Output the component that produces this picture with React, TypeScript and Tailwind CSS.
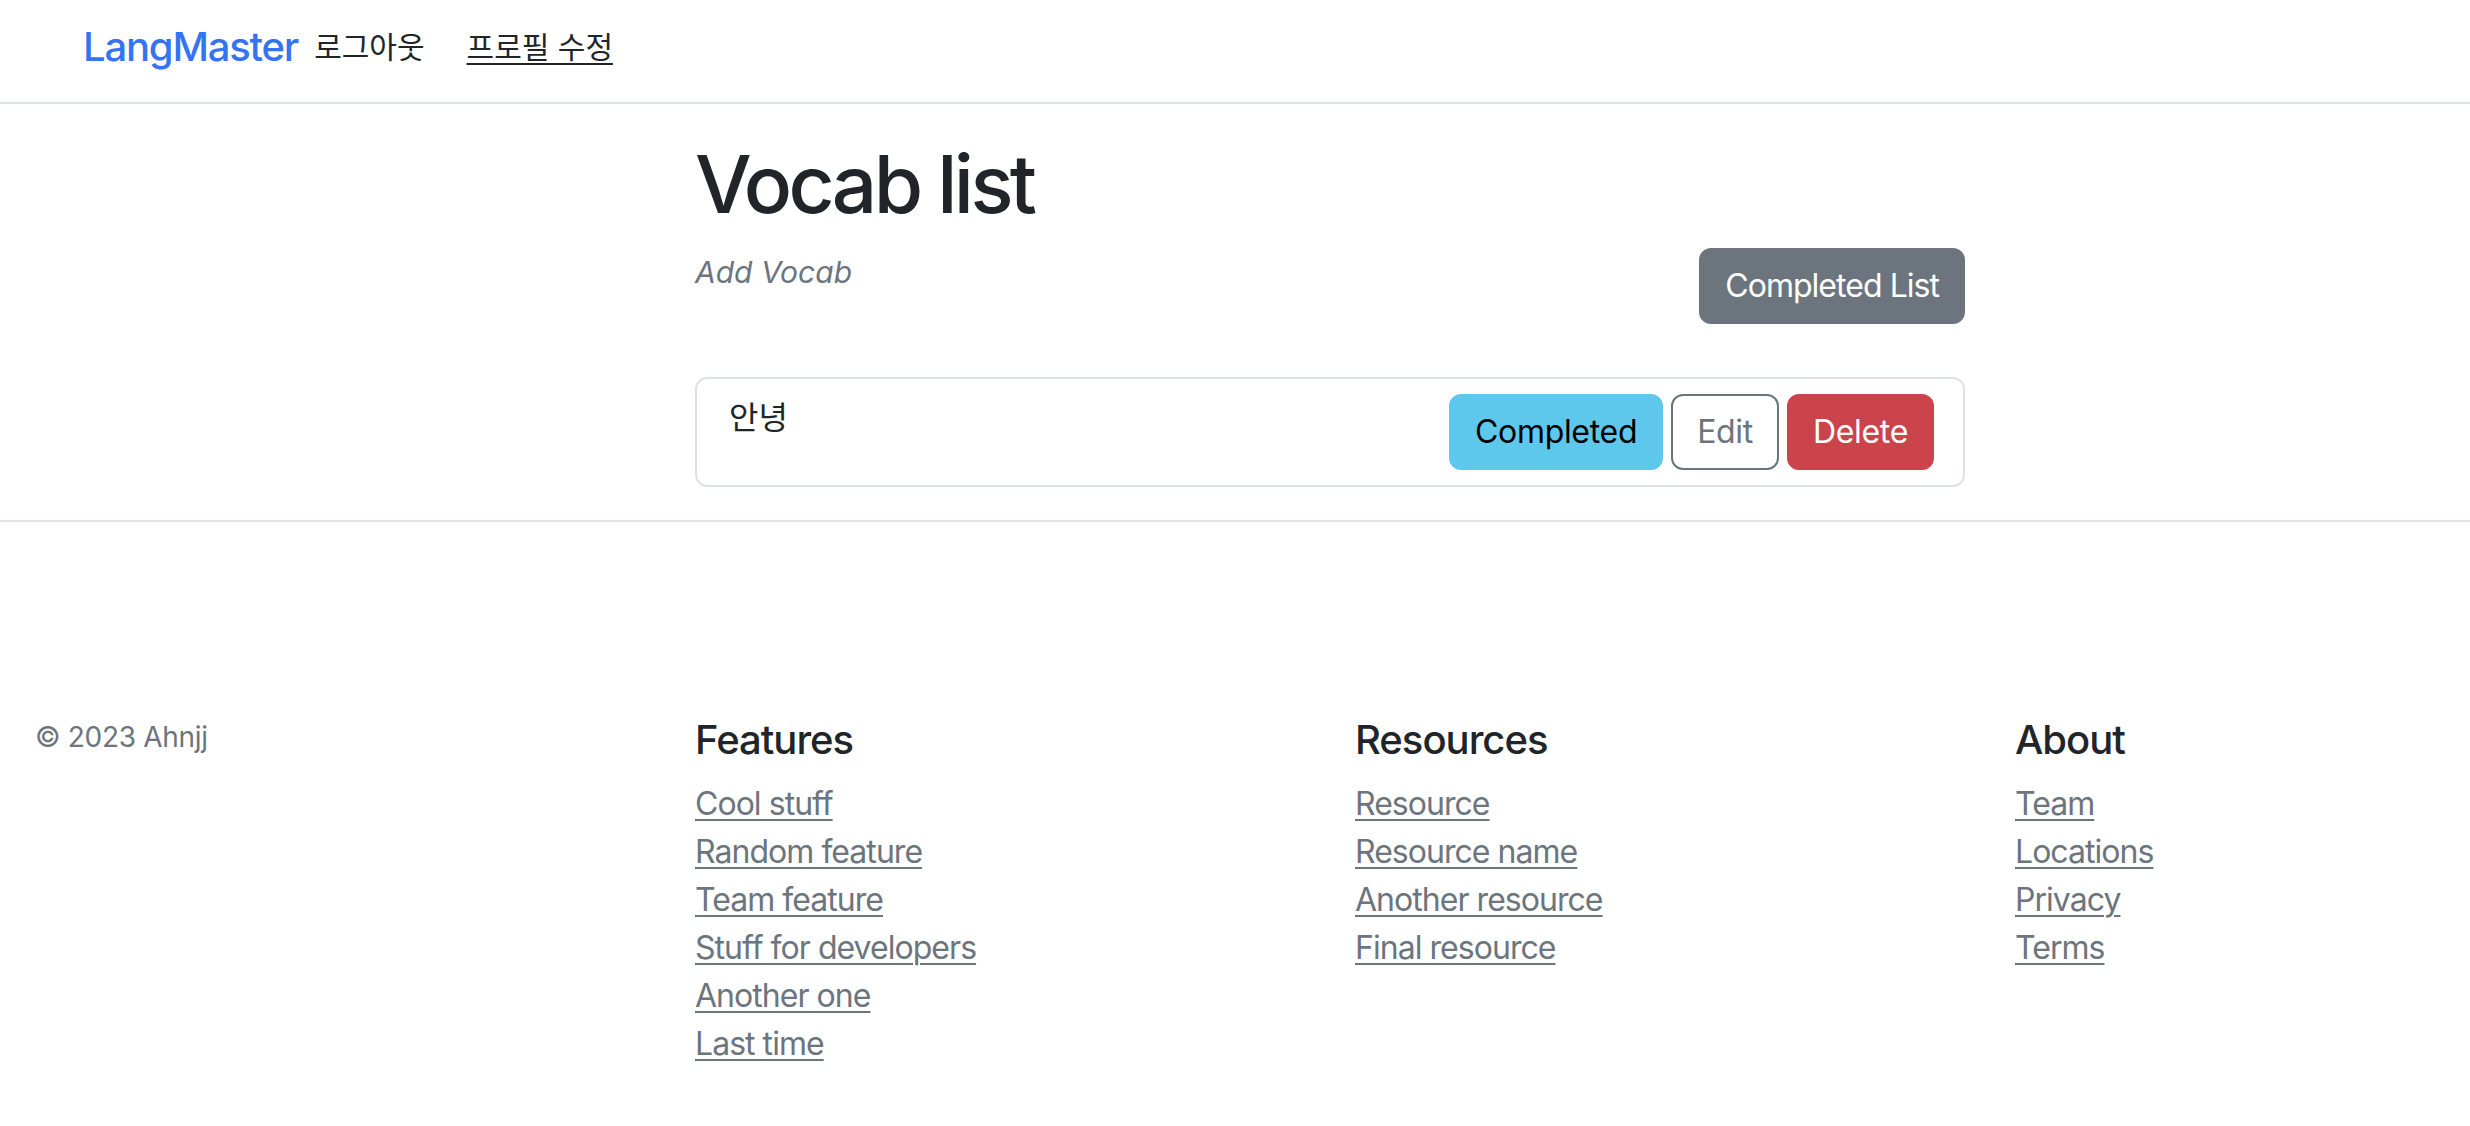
import React from 'react'

const features = ['Cool stuff', 'Random feature', 'Team feature', 'Stuff for developers', 'Another one', 'Last time']
const resources = ['Resource', 'Resource name', 'Another resource', 'Final resource']
const about = ['Team', 'Locations', 'Privacy', 'Terms']

function FooterColumn({title, links}: {title: string; links: string[]}) {
  return (
    <div>
      <h5 className="text-[40px] leading-[48px] font-medium tracking-[-0.025em] text-[#212529] mb-[16px]">{title}</h5>
      <ul>
        {links.map(link => (
          <li key={link} className="text-[32px] leading-[48px] tracking-[-0.03em]">
            <a href="#" className="text-[#6c757d] underline decoration-2 underline-offset-[4px]">
              {link}
            </a>
          </li>
        ))}
      </ul>
    </div>
  )
}

export default function App() {
  return (
    <div className="min-h-screen bg-white text-[#212529] tracking-[-0.02em] overflow-x-hidden font-['Inter','Noto_Sans_CJK_KR',sans-serif]">
      {/* Navbar */}
      <header className="h-[104px] border-b-2 border-[#dee2e6] flex items-center pl-[83px] pb-[8px]">
        <a href="#" className="text-[40px] leading-[60px] font-medium tracking-[-0.03em] text-[#3474f4]">LangMaster</a>
        <a href="#" className="ml-[16px] text-[30px] tracking-normal text-[#212529]">로그아웃</a>
        <a href="#" className="ml-[42px] text-[30px] tracking-normal text-[#212529] underline decoration-2 underline-offset-[5px]">프로필 수정</a>
      </header>

      {/* Vocab list */}
      <section className="border-b-2 border-[#dee2e6] pb-[33px]">
        <div className="grid grid-cols-[612px_612px_612px_612px] gap-x-[48px] pl-[35px]">
          <div className="col-start-2 col-span-2 pt-[32px] pr-[2px]">
            <h1 className="text-[80px] leading-[96px] font-medium tracking-[-0.045em] mb-[16px]">Vocab list</h1>
            <div className="flex justify-between items-start">
              <p className="text-[30px] leading-[48px] italic tracking-normal text-[#6c757d]">Add Vocab</p>
              <button className="bg-[#6c757d] text-white text-[32px] leading-[48px] tracking-[-0.03em] px-[24px] py-[12px] border-2 border-[#6c757d] rounded-[12px]">
                Completed List
              </button>
            </div>

            <div className="mt-[53px] border-2 border-[#dee2e6] rounded-[12px] pl-[32px] pr-[29px] py-[15px] flex justify-between items-start">
              <span className="text-[32px] leading-[48px] tracking-normal">안녕</span>
              <div className="flex gap-[8px]">
                <button className="bg-[#5ec8ec] border-2 border-[#5ec8ec] text-black text-[32px] leading-[48px] px-[24px] py-[12px] rounded-[12px]">
                  Completed
                </button>
                <button className="bg-white border-2 border-[#6c757d] text-[#6c757d] text-[32px] leading-[48px] px-[24px] py-[12px] rounded-[12px]">
                  Edit
                </button>
                <button className="bg-[#cc444b] border-2 border-[#cc444b] text-white text-[32px] leading-[48px] px-[24px] py-[12px] rounded-[12px]">
                  Delete
                </button>
              </div>
            </div>
          </div>
        </div>
      </section>

      {/* Footer */}
      <footer className="pt-[194px] pb-[96px]">
        <div className="grid grid-cols-[612px_612px_612px_612px] gap-x-[48px] pl-[35px]">
          <p className="text-[28px] leading-[42px] text-[#6c757d]">© 2023 Ahnjj</p>
          <FooterColumn title="Features" links={features} />
          <FooterColumn title="Resources" links={resources} />
          <FooterColumn title="About" links={about} />
        </div>
      </footer>
    </div>
  )
}
